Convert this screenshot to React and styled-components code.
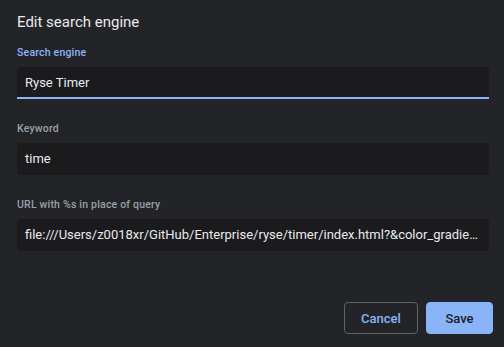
import React from 'react';
import styled, { createGlobalStyle } from 'styled-components';

const GlobalStyle = createGlobalStyle`
    html, body {
        margin: 0;
        padding: 0;
        background: #232427;
    }
`;

const Dialog = styled.div`
    box-sizing: border-box;
    display: flex;
    flex-direction: column;
    width: 504px;
    height: 347px;
    padding: 12px 15px 13px 17px;
    background: #232427;
    font-family: Roboto, 'Liberation Sans', sans-serif;
    color: #e8eaed;
`;

const Title = styled.h2`
    margin: 0 0 15px;
    font-size: 15px;
    font-weight: 400;
    line-height: 20px;
    color: #e8eaed;
`;

const Fields = styled.div`
    display: flex;
    flex-direction: column;
    gap: 24px;
`;

const Field = styled.div`
    display: flex;
    flex-direction: column;
    gap: 8px;
`;

const Label = styled.label`
    font-size: 10.5px;
    font-weight: 500;
    line-height: 12px;
    letter-spacing: 0.2px;
    color: ${({ $focused }) => ($focused ? '#8ab4f8' : '#9aa0a6')};
`;

const Input = styled.div`
    box-sizing: border-box;
    height: 32px;
    padding: 0 8px;
    border-radius: 4px;
    background: #1b1b1d;
    font-size: 13px;
    line-height: 32px;
    color: #e8eaed;
    white-space: nowrap;
    overflow: hidden;
    text-overflow: ellipsis;
    border-bottom: ${({ $focused }) => ($focused ? '2px solid #8ab4f8' : 'none')};
    border-bottom-left-radius: ${({ $focused }) => ($focused ? '0' : '4px')};
    border-bottom-right-radius: ${({ $focused }) => ($focused ? '0' : '4px')};
`;

const Buttons = styled.div`
    display: flex;
    justify-content: flex-end;
    gap: 8px;
    margin-top: auto;
    margin-right: -4px;
`;

const Button = styled.button`
    box-sizing: border-box;
    width: ${({ $primary }) => ($primary ? '67px' : '74px')};
    height: 32px;
    padding: 0;
    border-radius: 4px;
    border: 1px solid ${({ $primary }) => ($primary ? '#8ab4f8' : '#5f6368')};
    background: ${({ $primary }) => ($primary ? '#8ab4f8' : 'transparent')};
    color: ${({ $primary }) => ($primary ? '#202124' : '#8ab4f8')};
    font-family: Roboto, 'Liberation Sans', sans-serif;
    font-size: 13px;
    font-weight: 500;
`;

const fields = [
    { label: 'Search engine', value: 'Ryse Timer', focused: true },
    { label: 'Keyword', value: 'time' },
    {
        label: 'URL with %s in place of query',
        value: 'file:///Users/z0018xr/GitHub/Enterprise/ryse/timer/index.html?&color_gradient=true&sound=true',
    },
];

export default function App() {
    return (
        <>
            <GlobalStyle />
            <Dialog>
                <Title>Edit search engine</Title>
                <Fields>
                    {fields.map((f) => (
                        <Field key={f.label}>
                            <Label $focused={f.focused}>{f.label}</Label>
                            <Input $focused={f.focused}>{f.value}</Input>
                        </Field>
                    ))}
                </Fields>
                <Buttons>
                    <Button>Cancel</Button>
                    <Button $primary>Save</Button>
                </Buttons>
            </Dialog>
        </>
    );
}
